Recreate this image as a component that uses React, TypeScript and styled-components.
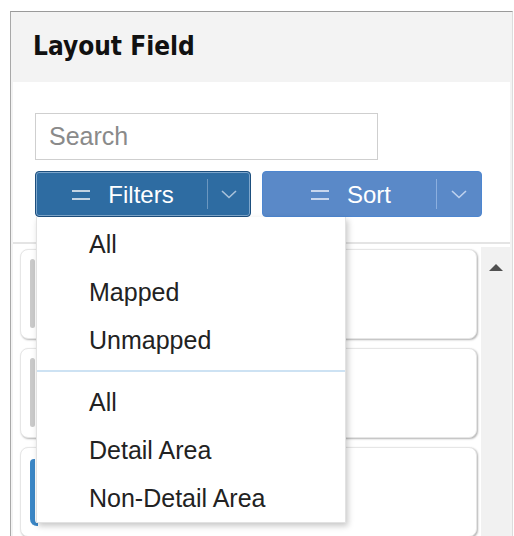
import React from 'react'
import styled, { createGlobalStyle } from 'styled-components'

const GlobalStyle = createGlobalStyle`
  html, body {
    margin: 0;
    padding: 0;
    background: #ffffff;
  }
  body {
    font-family: 'Liberation Sans', Arial, sans-serif;
    color: #222;
  }
`

type Variant = 'primary' | 'secondary'

const filterGroups: string[][] = [
  ['All', 'Mapped', 'Unmapped'],
  ['All', 'Detail Area', 'Non-Detail Area'],
]

const fields = [{ active: false }, { active: false }, { active: true }]

const App: React.FC = () => {
  return (
    <>
      <GlobalStyle />
      <Page>
        <Panel>
          <PanelHeader>Layout Field</PanelHeader>
          <PanelBody>
            <SearchInput placeholder="Search" />
            <Toolbar>
              <SplitButton variant="primary">
                <ButtonMain>
                  <EqualIcon variant="primary" />
                  <span>Filters</span>
                </ButtonMain>
                <ButtonCaret variant="primary">
                  <Chevron variant="primary" />
                </ButtonCaret>
              </SplitButton>
              <SplitButton variant="secondary">
                <ButtonMain>
                  <EqualIcon variant="secondary" />
                  <span>Sort</span>
                </ButtonMain>
                <ButtonCaret variant="secondary">
                  <Chevron variant="secondary" />
                </ButtonCaret>
              </SplitButton>

              {/* open filter dropdown */}
              <FilterMenu>
                {filterGroups.map((group, gi) => (
                  <React.Fragment key={gi}>
                    {gi > 0 && <MenuDivider />}
                    {group.map(item => (
                      <MenuItem key={item}>{item}</MenuItem>
                    ))}
                  </React.Fragment>
                ))}
              </FilterMenu>
            </Toolbar>

            <ListDivider />

            <ListArea>
              <FieldList>
                {fields.map((f, i) => (
                  <FieldCard key={i}>
                    <Accent active={f.active} />
                  </FieldCard>
                ))}
              </FieldList>
              <Scrollbar>
                <ScrollArrow />
              </Scrollbar>
            </ListArea>
          </PanelBody>
        </Panel>
      </Page>
    </>
  )
}

const EqualIcon: React.FC<{ variant: Variant }> = ({ variant }) => (
  <svg width="18" height="10" viewBox="0 0 18 10">
    <g fill={variant === 'primary' ? '#c3d3e2' : '#c9d7ee'}>
      <rect x="0" y="0" width="18" height="2" />
      <rect x="0" y="8" width="18" height="2" />
    </g>
  </svg>
)

const Chevron: React.FC<{ variant: Variant }> = ({ variant }) => (
  <svg width="16" height="9" viewBox="0 0 16 9">
    <path
      d="M1 1 L8 7.5 L15 1"
      fill="none"
      stroke={variant === 'primary' ? '#a9c2da' : '#bfd2ee'}
      strokeWidth="1.6"
    />
  </svg>
)

const Page = styled.div`
  padding: 11px 0 0 10px;
`

const Panel = styled.div`
  width: 503px;
  height: 525px;
  box-sizing: border-box;
  background: #f3f3f3;
  border-top: 1px solid #9a9a9a;
  border-left: 1px solid #a8a8a8;
  border-right: 1px solid #dcdcdc;
  display: flex;
  flex-direction: column;
  overflow: hidden;
`

const PanelHeader = styled.div`
  flex-shrink: 0;
  height: 70px;
  box-sizing: border-box;
  padding: 19px 0 0 22px;
  font-family: 'DejaVu Sans Condensed', 'DejaVu Sans', sans-serif;
  font-stretch: condensed;
  font-weight: 700;
  font-size: 26px;
  line-height: 30px;
  color: #111;
`

const PanelBody = styled.div`
  flex: 1;
  min-height: 0;
  overflow: hidden;
  margin: 0 2px;
  background: #ffffff;
  padding-top: 31px;
`

const SearchInput = styled.input`
  display: block;
  margin-left: 22px;
  width: 343px;
  height: 47px;
  box-sizing: border-box;
  border: 1px solid #cfcfcf;
  padding: 0 13px;
  font-family: 'Liberation Sans', Arial, sans-serif;
  font-size: 25px;
  color: #333;
  outline: none;

  &::placeholder {
    color: #8a8a8a;
  }
`

const Toolbar = styled.div`
  position: relative;
  display: flex;
  gap: 11px;
  margin: 11px 0 0 22px;
`

const SplitButton = styled.div<{ variant: Variant }>`
  display: flex;
  height: 46px;
  width: ${p => (p.variant === 'primary' ? '216px' : '220px')};
  box-sizing: border-box;
  border-radius: 4px;
  color: #ffffff;
  font-size: 24px;
  background: ${p => (p.variant === 'primary' ? '#2e6ca2' : '#5a89c8')};
  border: 1px solid ${p => (p.variant === 'primary' ? '#1d4f7e' : '#4d86d0')};
  box-shadow: ${p => (p.variant === 'primary' ? 'inset 0 0 0 1px #7ea6cb' : 'none')};
`

const ButtonMain = styled.div`
  flex: 1;
  display: flex;
  align-items: center;
  justify-content: center;
  gap: 18px;
  padding: 1px 0 0 3px;
`

const ButtonCaret = styled.div<{ variant: Variant }>`
  width: ${p => (p.variant === 'primary' ? '43px' : '45px')};
  display: flex;
  align-items: center;
  justify-content: center;
  position: relative;

  &::before {
    content: '';
    position: absolute;
    left: 0;
    top: 7px;
    bottom: 7px;
    width: 1px;
    background: ${p => (p.variant === 'primary' ? '#6b97c0' : '#8cafdf')};
  }
`

const FilterMenu = styled.div`
  position: absolute;
  left: 1px;
  top: 46px;
  width: 310px;
  box-sizing: border-box;
  background: #ffffff;
  border: 1px solid #e2e2e2;
  border-top: none;
  box-shadow: 2px 3px 6px rgba(0, 0, 0, 0.22);
  padding-top: 3px;
  z-index: 5;
`

const MenuItem = styled.div`
  height: 48px;
  line-height: 48px;
  padding-left: 52px;
  font-size: 25px;
  color: #222;
  white-space: nowrap;
`

const MenuDivider = styled.div`
  height: 2px;
  background: #cde2f3;
  margin: 6px 0 6px;
`

const ListDivider = styled.div`
  height: 2px;
  margin-top: 25px;
  background: #e4e4e4;
`

const ListArea = styled.div`
  display: flex;
  align-items: stretch;
  height: 300px;
`

const FieldList = styled.div`
  flex: 1;
  display: flex;
  flex-direction: column;
  gap: 9px;
  padding: 5px 4px 0 7px;
`

const FieldCard = styled.div`
  height: 90px;
  flex-shrink: 0;
  box-sizing: border-box;
  display: flex;
  padding: 9px 0 10px 9px;
  background: #ffffff;
  border: 1px solid #e6e6e6;
  border-radius: 8px;
  box-shadow: 1px 1px 2px rgba(0, 0, 0, 0.3);
`

const Accent = styled.div<{ active: boolean }>`
  width: ${p => (p.active ? '8px' : '5px')};
  box-sizing: border-box;
  border-left: 5px solid ${p => (p.active ? '#3b87c6' : '#cacaca')};
  border-bottom: ${p => (p.active ? '3px solid #3b87c6' : 'none')};
  border-radius: ${p => (p.active ? '4px 0 0 7px' : '3px')};
  margin-top: ${p => (p.active ? '2px' : '0')};
`

const Scrollbar = styled.div`
  width: 29px;
  background: #f1f1f1;
  margin-top: 3px;
  display: flex;
  justify-content: center;
  padding-top: 17px;
  box-sizing: border-box;
`

const ScrollArrow = styled.div`
  width: 0;
  height: 0;
  border-left: 7px solid transparent;
  border-right: 7px solid transparent;
  border-bottom: 7px solid #505050;
`

export default App
